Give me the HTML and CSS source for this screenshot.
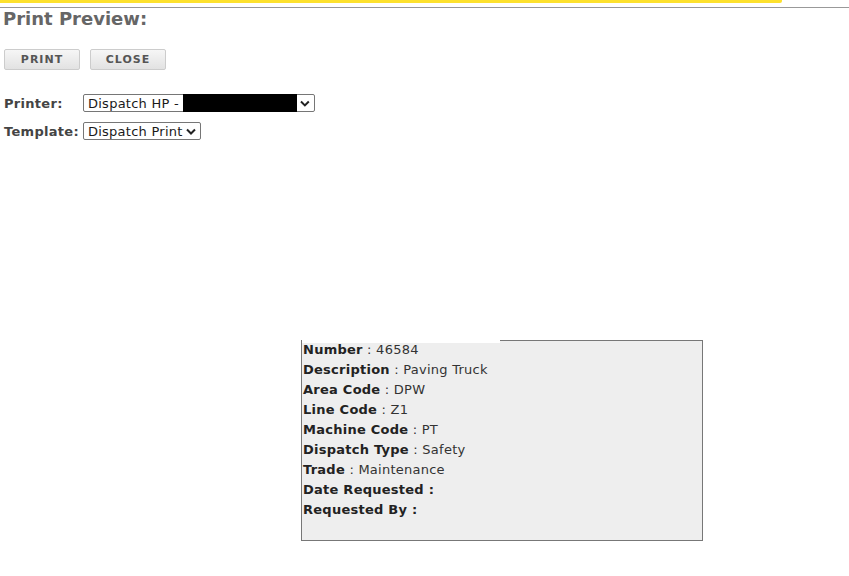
FILE: index.html
```html
<!DOCTYPE html>
<html lang="en">
<head>
  <meta charset="UTF-8">
  <title>Print Preview</title>
  <link rel="stylesheet" href="styles.css">
</head>
<body>
  <div class="loading-bar"></div>
  <div class="rule"></div>
  <div class="title">Print Preview:</div>

  <div class="actions">
    <button class="btn">PRINT</button>
    <button class="btn">CLOSE</button>
  </div>

  <div class="options">
    <div class="option-row">
      <label class="option-label label-printer">Printer:</label>
      <div class="select printer-select">
        <span class="select-text">Dispatch HP -</span>
        <span class="redacted"></span>
        <svg class="chevron" width="10" height="7" viewBox="0 0 10 7"><path d="M1 1.5 L5 5.5 L9 1.5" fill="none" stroke="#222" stroke-width="2"/></svg>
      </div>
    </div>
    <div class="option-row">
      <label class="option-label">Template:</label>
      <div class="select">
        <span class="select-text">Dispatch Print</span>
        <svg class="chevron" width="10" height="7" viewBox="0 0 10 7"><path d="M1 1.5 L5 5.5 L9 1.5" fill="none" stroke="#222" stroke-width="2"/></svg>
      </div>
    </div>
  </div>

  <div class="preview-wrap">
    <div class="preview">
      <div class="preview-mask"></div>
      <div class="field"><b>Number</b> : 46584</div>
      <div class="field"><b>Description</b> : Paving Truck</div>
      <div class="field"><b>Area Code</b> : DPW</div>
      <div class="field"><b>Line Code</b> : Z1</div>
      <div class="field"><b>Machine Code</b> : PT</div>
      <div class="field"><b>Dispatch Type</b> : Safety</div>
      <div class="field"><b>Trade</b> : Maintenance</div>
      <div class="field"><b>Date Requested :</b></div>
      <div class="field"><b>Requested By :</b></div>
    </div>
  </div>
</body>
</html>
```

FILE: styles.css
```css
body {
  margin: 0;
  background: #fff;
  font-family: "DejaVu Sans", Verdana, sans-serif;
  color: #333;
}

.loading-bar {
  width: 782px;
  height: 3px;
  background-color: #fde12d;
  border-radius: 0 0 2px 0;
}

.rule {
  height: 1px;
  background-color: #999;
  margin-top: 4px;
}

.title {
  font-size: 18px;
  font-weight: bold;
  color: #666;
  padding-left: 3px;
  line-height: 20px;
  margin-top: 1px;
}

.actions {
  display: flex;
  gap: 10px;
  padding-left: 4px;
  margin-top: 20px;
}

.btn {
  width: 76px;
  height: 21px;
  padding: 0;
  font-family: "DejaVu Sans", Verdana, sans-serif;
  font-size: 11px;
  font-weight: bold;
  letter-spacing: 1px;
  color: #555;
  background: linear-gradient(#f6f6f6, #e2e2e2);
  border: 1px solid #ccc;
  border-radius: 2px;
}

.options {
  margin-top: 24px;
  padding-left: 4px;
  display: flex;
  flex-direction: column;
  gap: 10px;
}

.option-row {
  display: flex;
  align-items: center;
  height: 18px;
}

.option-label {
  font-size: 13px;
  font-weight: bold;
  letter-spacing: 0.3px;
  color: #444;
  margin-right: 4px;
}

.label-printer {
  width: 75px;
  margin-right: 4px;
}

.select {
  display: flex;
  align-items: center;
  height: 18px;
  box-sizing: border-box;
  border: 1px solid #767676;
  border-radius: 2px;
  padding: 0 4px 0 4px;
  font-size: 13px;
  letter-spacing: 0.25px;
  color: #1a1a1a;
}

.printer-select {
  width: 232px;
}

.select-text {
  white-space: nowrap;
}

.redacted {
  width: 117px;
  height: 18px;
  background: #000;
  margin-left: 4px;
}

.chevron {
  margin-left: auto;
  padding-left: 3px;
}

.preview-wrap {
  padding-left: 301px;
  margin-top: 200px;
}

.preview {
  position: relative;
  width: 400px;
  height: 199px;
  border: 1px solid #777;
  background: #eee;
  box-sizing: content-box;
}

.preview-mask {
  position: absolute;
  top: -1px;
  left: 0;
  width: 198px;
  height: 3px;
  background: #fff;
}

.field {
  position: relative;
  top: -1px;
  font-size: 13px;
  letter-spacing: 0.25px;
  line-height: 20px;
  padding-left: 1px;
  color: #333;
}

.field b {
  color: #222;
}
```
